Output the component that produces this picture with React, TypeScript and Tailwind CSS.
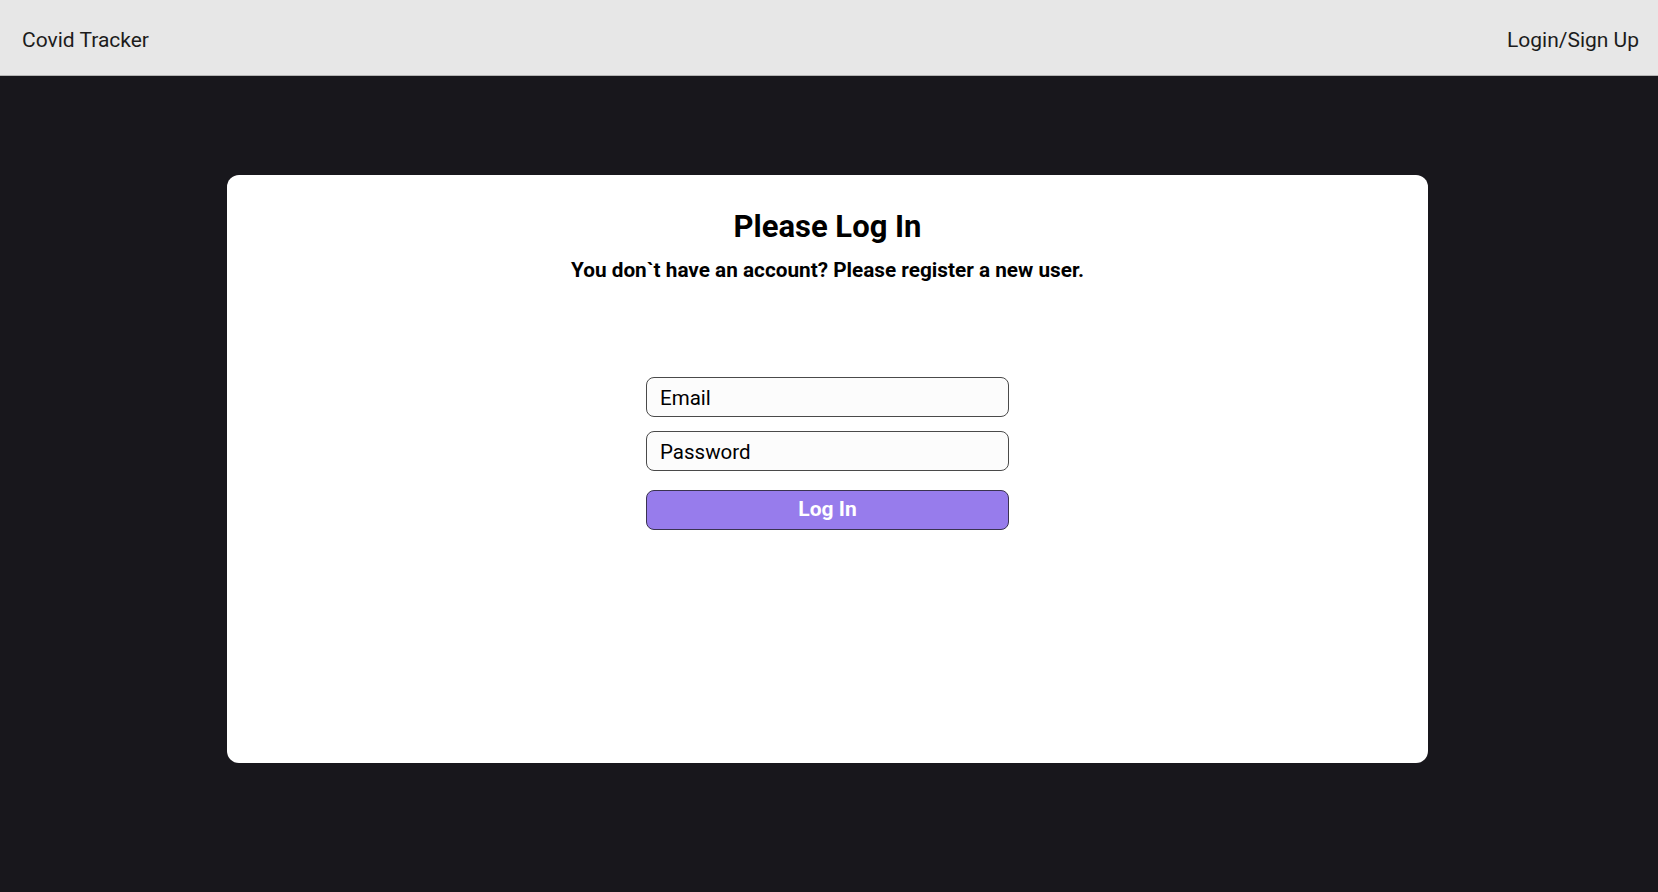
export default function App() {
  return (
    <div className="flex h-[892px] w-full flex-col bg-[#18171c]" style={{ fontFamily: "Roboto, 'Noto Sans', sans-serif" }}>
      <header className="flex h-[76px] shrink-0 items-center justify-between border-b border-[#b5b5b5] bg-[#e7e7e7] pl-[22px] pr-[19px] pt-[7px]">
        <span className="text-[21px] text-[#1c1c1c]">Covid Tracker</span>
        <span className="text-[21px] text-[#1c1c1c]">Login/Sign Up</span>
      </header>
      <main className="flex-1 pl-[227px] pt-[99px]">
        <div className="flex h-[588px] w-[1201px] flex-col items-center rounded-[12px] bg-white pt-[33px]">
          <h1 className="text-[31px] font-bold leading-[38px] text-black">Please Log In</h1>
          <p className="mt-[11px] text-[20.75px] font-bold leading-[26px] text-black">You don`t have an account? Please register a new user.</p>
          <form className="mt-[94px] flex w-[363px] flex-col">
            <div className="flex h-[40px] items-center rounded-[8px] border border-[#4a4a4a] bg-[#fcfcfc] px-[13px] pt-[2px] text-[20.5px] text-black">Email</div>
            <div className="mt-[14px] flex h-[40px] items-center rounded-[8px] border border-[#4a4a4a] bg-[#fcfcfc] px-[13px] pt-[2px] text-[20.5px] text-black">Password</div>
            <button type="button" className="mt-[19px] flex h-[40px] items-center justify-center rounded-[8px] border border-[#3a3350] bg-[#977cec] text-[21px] font-bold text-white">Log In</button>
          </form>
        </div>
      </main>
    </div>
  );
}
